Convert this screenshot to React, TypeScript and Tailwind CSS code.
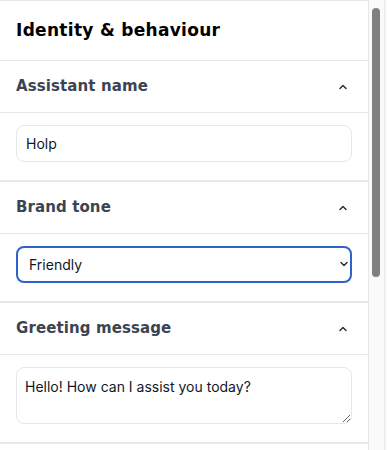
import React from "react";

const heading = { fontFamily: "'DejaVu Sans', Inter, sans-serif" };

function Chevron({ up }: { up: boolean }) {
  return (
    <svg width="10" height="10" viewBox="0 0 10 10" className="text-gray-800">
      <path
        d={up ? "M2 6.5 L5 3.5 L8 6.5" : "M2 3.5 L5 6.5 L8 3.5"}
        fill="none"
        stroke="currentColor"
        strokeWidth="1.4"
        strokeLinecap="round"
        strokeLinejoin="round"
      />
    </svg>
  );
}

function Section({
  title,
  children,
}: {
  title: string;
  children: React.ReactNode;
}) {
  return (
    <div className="border-b-2 border-gray-200">
      <div className="flex h-[52px] items-center justify-between border-b border-gray-200 pl-4 pr-[20px]">
        <span
          className="text-[15px] font-bold tracking-[0.1px] text-[#3c4453]"
          style={heading}
        >
          {title}
        </span>
        <Chevron up />
      </div>
      <div className="px-4 pb-[18px] pt-3">{children}</div>
    </div>
  );
}

export default function App() {
  const [name, setName] = React.useState("Holp");
  const [tone, setTone] = React.useState("Friendly");
  const [greeting, setGreeting] = React.useState(
    "Hello! How can I assist you today?"
  );

  return (
    <div
      className="flex h-[450px] overflow-hidden bg-[#f8f8f8]"
      style={{ fontFamily: "Inter, 'Noto Sans', sans-serif" }}
    >
      <div className="h-full w-[369px] shrink-0 overflow-hidden border-r border-gray-200 bg-white">
        <div className="border-t border-gray-200">
          <div className="flex h-[60px] items-center border-b border-gray-200 px-4">
            <h1
              className="text-[17px] font-bold tracking-[0.3px] text-black"
              style={heading}
            >
              Identity &amp; behaviour
            </h1>
          </div>

          <Section title="Assistant name">
            <input
              value={name}
              onChange={(e) => setName(e.target.value)}
              className="h-[37px] w-full rounded-lg border border-gray-200 px-[9px] text-sm text-gray-900 outline-none"
            />
          </Section>

          <Section title="Brand tone">
            <div className="relative">
              <select
                value={tone}
                onChange={(e) => setTone(e.target.value)}
                className="h-[37px] w-full appearance-none rounded-lg border-2 border-[#2c64c8] bg-white px-[11px] text-sm text-gray-900 outline-none"
              >
                <option>Friendly</option>
                <option>Professional</option>
                <option>Playful</option>
              </select>
              <span className="pointer-events-none absolute right-[3px] top-[13px]">
                <Chevron up={false} />
              </span>
            </div>
          </Section>

          <Section title="Greeting message">
            <textarea
              value={greeting}
              onChange={(e) => setGreeting(e.target.value)}
              className="block h-[57px] w-full rounded-lg border border-gray-200 px-2 py-[9px] text-sm text-gray-900 outline-none"
            />
          </Section>
        </div>
      </div>

      {/* scrollbar */}
      <div className="h-full w-[15px] shrink-0 bg-[#fafafa] px-[3px] pt-2">
        <div className="h-[269px] w-[8px] rounded-full bg-[#808080]" />
      </div>
      <div className="h-full w-[3px] shrink-0 border-l border-gray-200 bg-[#f8f8f8]" />
    </div>
  );
}
